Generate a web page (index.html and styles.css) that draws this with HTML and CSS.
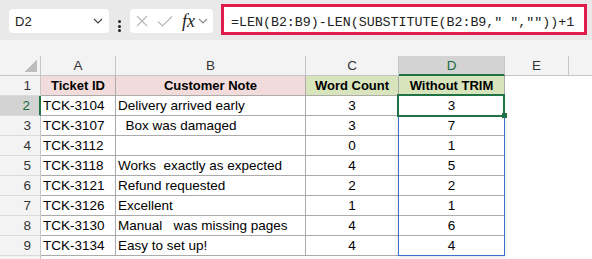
FILE: index.html
```html
<!DOCTYPE html>
<html lang="en">

<head>
  <meta charset="UTF-8" />
  <meta name="viewport" content="width=device-width, initial-scale=1.0" />
  <title>Word Count with and without TRIM</title>
  <link rel="stylesheet" href="styles.css">
</head>

<body>
  <div class="toolbar">
    <div class="namebox">
      <span>D2</span>
      <svg class="chev" width="10" height="6" viewBox="0 0 10 6">
        <path d="M1 1l4 4 4-4" />
      </svg>
    </div>
    <div class="dots"><span></span><span></span><span></span></div>
    <div class="fnbox">
      <svg class="cancel" width="12" height="12" viewBox="0 0 12 12">
        <path d="M1 1L11 11M11 1L1 11" />
      </svg>
      <svg class="check" width="16" height="12" viewBox="0 0 16 12">
        <path d="M1 6.5L5.5 11L15 1.5" />
      </svg>
      <span class="fx">fx</span>
      <svg class="chev light" width="10" height="6" viewBox="0 0 10 6">
        <path d="M1 1l4 4 4-4" />
      </svg>
    </div>
    <div class="formula">=LEN(B2:B9)-LEN(SUBSTITUTE(B2:B9," ",""))+1</div>
  </div>
  <div class="band"></div>

  <div class="sheet">
    <!-- column headers -->
    <div class="hd corner"><span class="tri"></span></div>
    <div class="hd">A</div>
    <div class="hd">B</div>
    <div class="hd">C</div>
    <div class="hd on">D</div>
    <div class="hd">E</div>
    <div class="hd last"></div>

    <div class="rh">1</div>
    <div class="c th pink">Ticket ID</div>
    <div class="c th pink">Customer Note</div>
    <div class="c th green">Word Count</div>
    <div class="c th green">Without TRIM</div>
    <div class="e"></div>
    <div class="e"></div>

    <div class="rh on">2</div>
    <div class="c">TCK-3104</div>
    <div class="c">Delivery arrived early</div>
    <div class="c num">3</div>
    <div class="c num active">3<span class="handle"></span></div>
    <div class="e"></div>
    <div class="e"></div>

    <div class="rh">3</div>
    <div class="c">TCK-3107</div>
    <div class="c">  Box was damaged  </div>
    <div class="c num">3</div>
    <div class="c num spillhost">7<span class="spill"></span></div>
    <div class="e"></div>
    <div class="e"></div>

    <div class="rh">4</div>
    <div class="c">TCK-3112</div>
    <div class="c"></div>
    <div class="c num">0</div>
    <div class="c num">1</div>
    <div class="e"></div>
    <div class="e"></div>

    <div class="rh">5</div>
    <div class="c">TCK-3118</div>
    <div class="c">Works  exactly as expected</div>
    <div class="c num">4</div>
    <div class="c num">5</div>
    <div class="e"></div>
    <div class="e"></div>

    <div class="rh">6</div>
    <div class="c">TCK-3121</div>
    <div class="c">Refund requested</div>
    <div class="c num">2</div>
    <div class="c num">2</div>
    <div class="e"></div>
    <div class="e"></div>

    <div class="rh">7</div>
    <div class="c">TCK-3126</div>
    <div class="c">Excellent</div>
    <div class="c num">1</div>
    <div class="c num">1</div>
    <div class="e"></div>
    <div class="e"></div>

    <div class="rh">8</div>
    <div class="c">TCK-3130</div>
    <div class="c">Manual   was missing pages</div>
    <div class="c num">4</div>
    <div class="c num">6</div>
    <div class="e"></div>
    <div class="e"></div>

    <div class="rh">9</div>
    <div class="c">TCK-3134</div>
    <div class="c">Easy to set up!</div>
    <div class="c num">4</div>
    <div class="c num">4</div>
    <div class="e"></div>
    <div class="e"></div>

    <!-- row 10 only peeks in at the bottom edge -->
    <div class="rh tail"></div>
    <div class="e"></div>
  </div>
</body>

</html>
```

FILE: styles.css
```css
body {
  margin: 0;
  width: 592px;
  height: 259px;
  overflow: hidden;
  font-family: "Liberation Sans", Arial, sans-serif;
  font-size: 13.5px;
  color: #000;
  background: #fff;
}

/* formula bar */

.toolbar {
  display: flex;
  align-items: flex-start;
  height: 40px;
  box-sizing: border-box;
  padding: 4px 0 0 9px;
  background: #e9e9e9;
}

.namebox {
  display: flex;
  align-items: center;
  justify-content: space-between;
  box-sizing: border-box;
  width: 100px;
  height: 24px;
  margin-top: 5px;
  padding: 0 6px 0 6px;
  background: #fff;
  border-radius: 4px;
  font-size: 13px;
  color: #222;
}

.chev path {
  fill: none;
  stroke: #444;
  stroke-width: 1.2;
}

.chev.light path {
  stroke: #8c8c8c;
}

.dots {
  display: flex;
  flex-direction: column;
  gap: 1.5px;
  margin: 16px 0 0 9px;
}

.dots span {
  width: 3px;
  height: 3px;
  border-radius: 50%;
  background: #222;
}

.fnbox {
  display: flex;
  align-items: center;
  box-sizing: border-box;
  width: 83px;
  height: 24px;
  margin: 5px 0 0 9px;
  padding-left: 6px;
  background: #fff;
  border-radius: 4px;
}

.cancel path,
.check path {
  fill: none;
  stroke: #b9b9b9;
  stroke-width: 1.2;
}

.check {
  margin-left: 9px;
}

.fx {
  margin-left: 9px;
  font-family: "Liberation Serif", serif;
  font-style: italic;
  font-size: 18px;
  color: #222;
  line-height: 1;
}

.fnbox .chev {
  margin-left: 3px;
}

.formula {
  box-sizing: border-box;
  width: 366px;
  height: 31px;
  margin-left: 8px;
  padding: 7px 0 0 7px;
  border: 3px solid #e11b4c;
  background: #fff;
  font-family: "Liberation Mono", monospace;
  font-size: 13.3px;
  line-height: 18px;
  color: #222;
  white-space: pre;
  overflow: hidden;
}

.band {
  height: 16px;
  background: #f3f3f3;
}

/* grid */

.sheet {
  display: grid;
  grid-template-columns: 41px 75px 190px 93px 106px 64px 23px;
  grid-template-rows: repeat(10, 20px) 3px;
  line-height: 19px;
}

.hd {
  background: #f3f3f3;
  border-right: 1px solid #c6c6c6;
  border-bottom: 1px solid #c6c6c6;
  text-align: center;
  color: #333;
}

.hd.last {
  border-right: none;
}

.hd.on {
  background: #d3d3d3;
  border-bottom: 2px solid #217346;
  color: #1b6a3c;
}

.corner {
  display: flex;
  justify-content: flex-end;
  align-items: flex-end;
  padding: 0 3px 3px 0;
}

.tri {
  width: 12px;
  height: 12px;
  background: linear-gradient(to bottom right, transparent 50%, #bdbdbd 50%);
}

.rh {
  background: #f3f3f3;
  border-right: 1px solid #c6c6c6;
  border-bottom: 1px solid #dadada;
  text-align: right;
  padding-right: 9px;
  color: #333;
}

.rh.on {
  background: #d3d3d3;
  border-right: 2px solid #217346;
  color: #1b6a3c;
}

.rh.tail {
  border-bottom: none;
}

.c {
  border-right: 1px solid #ababab;
  border-bottom: 1px solid #ababab;
  padding: 0 2px;
  white-space: pre;
}

.th {
  font-weight: bold;
  font-size: 13px;
  text-align: center;
}

.pink {
  background: #f2dcdb;
}

.green {
  background: #d8e4bc;
}

.num {
  text-align: center;
}

.active,
.spillhost {
  position: relative;
}

.active::before {
  content: "";
  position: absolute;
  left: -2px;
  top: -2px;
  width: 108px;
  height: 23px;
  box-sizing: border-box;
  border: 2px solid #217346;
  z-index: 2;
}

.handle {
  position: absolute;
  left: 103px;
  top: 17px;
  width: 5px;
  height: 5px;
  background: #217346;
  z-index: 3;
}

.spill {
  position: absolute;
  left: -1px;
  top: 0;
  width: 107px;
  height: 140px;
  box-sizing: border-box;
  border: 1px solid #3a6fd0;
  border-top: none;
  box-shadow: 0 1px 4px rgba(0, 0, 0, 0.12);
  z-index: 1;
}
```
